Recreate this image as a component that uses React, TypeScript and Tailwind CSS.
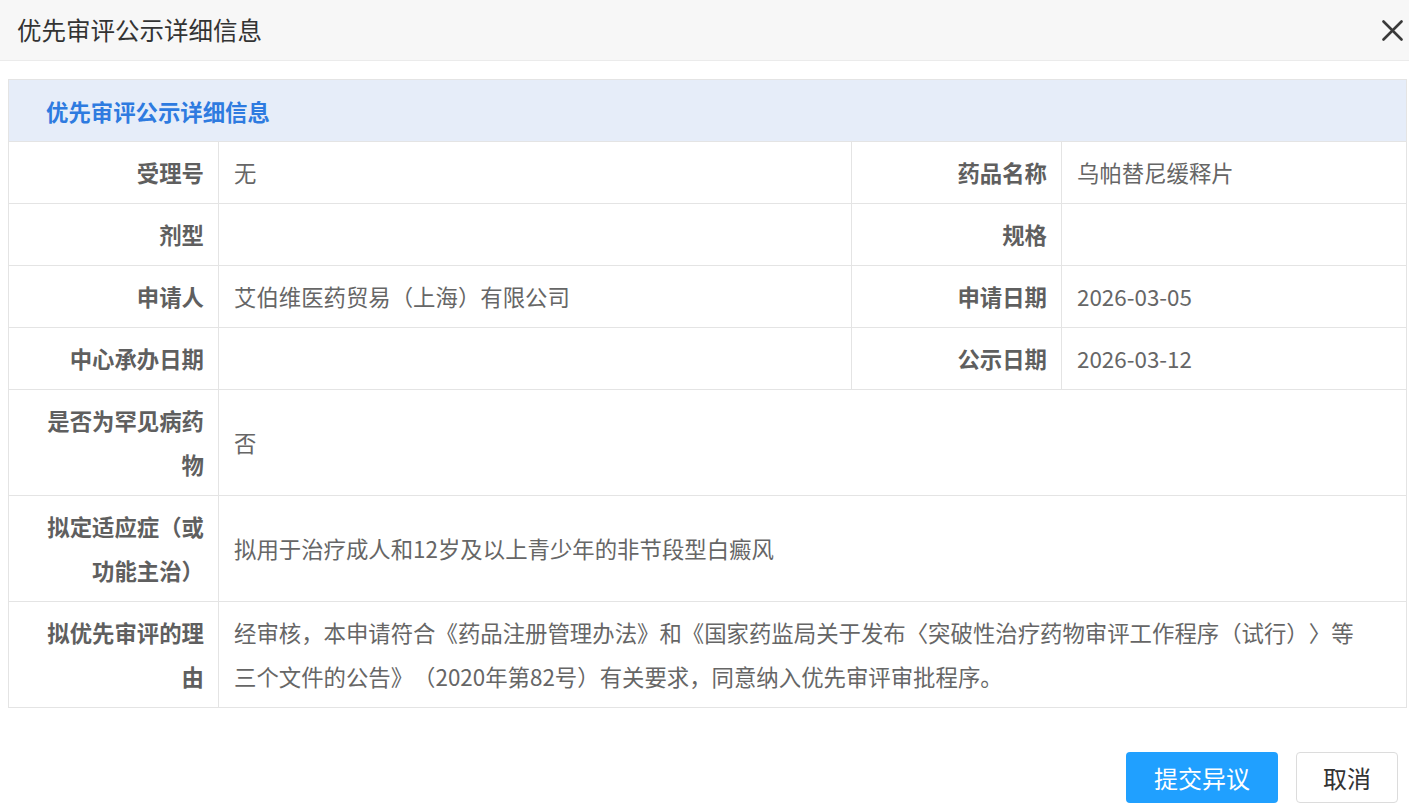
const font = { fontFamily: '"Noto Sans CJK SC", "Noto Sans", sans-serif' };

function Label({ children }: { children: React.ReactNode }) {
  return (
    <td className="w-[210px] border border-[#e4e4e4] pb-[9px] pl-[20px] pr-[14px] pt-[8px] text-right align-middle font-bold text-[#5f5f5f]">
      {children}
    </td>
  );
}

function Value({ children, span }: { children?: React.ReactNode; span?: number }) {
  return (
    <td
      colSpan={span}
      className="border border-[#e4e4e4] pb-[9px] pl-[15px] pr-[36px] pt-[8px] text-left align-middle text-[#666]"
    >
      {children}
    </td>
  );
}

export default function App() {
  return (
    <div className="min-h-[809px] w-[1409px] bg-white [text-spacing-trim:space-all]" style={font}>
      <div className="flex h-[61px] items-center justify-between border-b border-[#ebebeb] bg-[#f7f7f7] pl-[17px] pr-[6px]">
        <span className="text-[24.5px] text-[#333]">优先审评公示详细信息</span>
        <svg width="21" height="21" viewBox="0 0 21 21" className="text-[#3a3a3a]">
          <path d="M1.5 1.5L19.5 19.5M19.5 1.5L1.5 19.5" stroke="currentColor" strokeWidth="2.6" strokeLinecap="round" />
        </svg>
      </div>

      <div className="ml-[8px] mr-[2px] mt-[18px]">
        <table className="w-full table-fixed border-collapse text-[22.4px] leading-[44px]">
          <colgroup>
            <col className="w-[210px]" />
            <col className="w-[633px]" />
            <col className="w-[210px]" />
            <col />
          </colgroup>
          <tbody>
            <tr>
              <td
                colSpan={4}
                className="h-[62px] border border-[#e4e4e4] bg-[#e6edf9] pl-[37px] font-bold text-[#2e7be0]"
              >
                优先审评公示详细信息
              </td>
            </tr>
            <tr>
              <Label>受理号</Label>
              <Value>无</Value>
              <Label>药品名称</Label>
              <Value>乌帕替尼缓释片</Value>
            </tr>
            <tr>
              <Label>剂型</Label>
              <Value />
              <Label>规格</Label>
              <Value />
            </tr>
            <tr>
              <Label>申请人</Label>
              <Value>艾伯维医药贸易（上海）有限公司</Value>
              <Label>申请日期</Label>
              <Value>2026-03-05</Value>
            </tr>
            <tr>
              <Label>中心承办日期</Label>
              <Value />
              <Label>公示日期</Label>
              <Value>2026-03-12</Value>
            </tr>
            <tr>
              <Label>是否为罕见病药物</Label>
              <Value span={3}>否</Value>
            </tr>
            <tr>
              <Label>拟定适应症（或功能主治）</Label>
              <Value span={3}>拟用于治疗成人和12岁及以上青少年的非节段型白癜风</Value>
            </tr>
            <tr>
              <Label>拟优先审评的理由</Label>
              <Value span={3}>
                经审核，本申请符合《药品注册管理办法》和《国家药监局关于发布〈突破性治疗药物审评工作程序（试行）〉等三个文件的公告》（2020年第82号）有关要求，同意纳入优先审评审批程序。
              </Value>
            </tr>
          </tbody>
        </table>
      </div>

      <div className="mt-[44px] flex justify-end gap-[18px] pr-[11px]">
        <button className="h-[51px] w-[152px] rounded-[4px] bg-[#20a0ff] text-[24px] text-white">
          提交异议
        </button>
        <button className="h-[51px] w-[102px] rounded-[4px] border border-[#dcdcdc] bg-white text-[24px] text-[#333]">
          取消
        </button>
      </div>
    </div>
  );
}
